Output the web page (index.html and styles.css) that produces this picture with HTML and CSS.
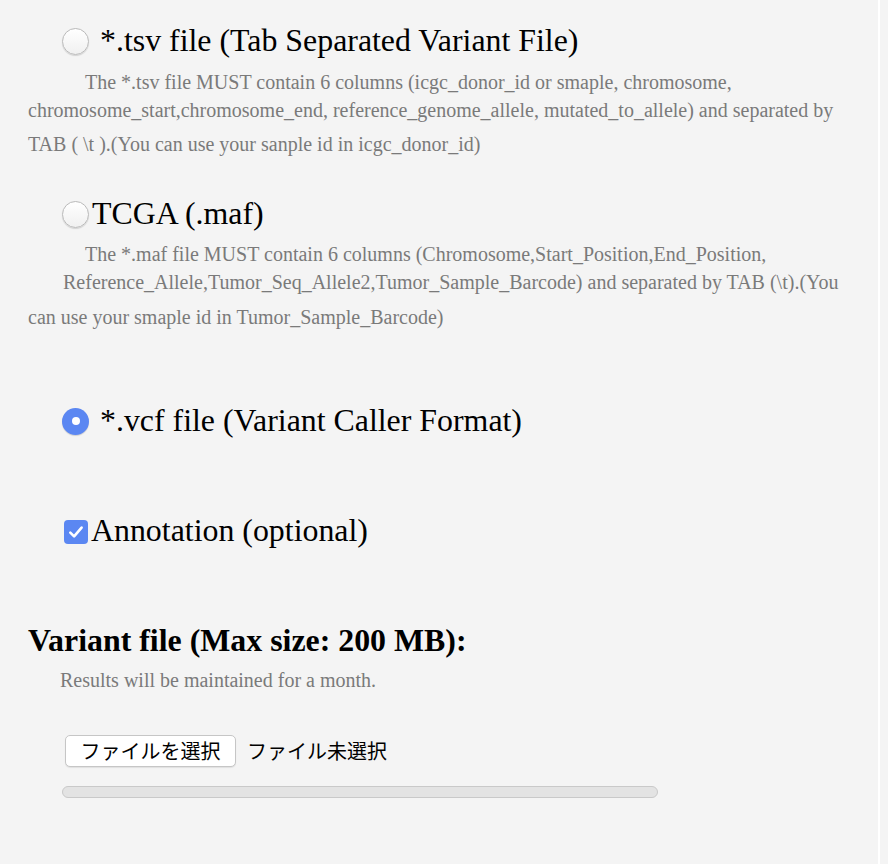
FILE: index.html
```html
<!DOCTYPE html>
<html lang="ja">
<head>
<meta charset="utf-8">
<title>Variant upload</title>
<link rel="stylesheet" href="styles.css">
</head>
<body>
<div class="page">
  <div class="opt opt-tsv">
    <span class="radio"></span>
    <span class="label gap-wide">*.tsv file (Tab Separated Variant File)</span>
  </div>
  <div class="desc desc-tsv">
    <div class="line indent">The *.tsv file MUST contain 6 columns (icgc_donor_id or smaple, chromosome,</div>
    <div class="line">chromosome_start,chromosome_end, reference_genome_allele, mutated_to_allele) and separated by</div>
    <div class="line last">TAB ( \t ).(You can use your sanple id in icgc_donor_id)</div>
  </div>

  <div class="opt opt-maf">
    <span class="radio"></span>
    <span class="label gap-tight">TCGA (.maf)</span>
  </div>
  <div class="desc desc-maf">
    <div class="line indent">The *.maf file MUST contain 6 columns (Chromosome,Start_Position,End_Position,</div>
    <div class="line indent-small">Reference_Allele,Tumor_Seq_Allele2,Tumor_Sample_Barcode) and separated by TAB (\t).(You</div>
    <div class="line last">can use your smaple id in Tumor_Sample_Barcode)</div>
  </div>

  <div class="opt opt-vcf">
    <span class="radio checked"></span>
    <span class="label gap-wide">*.vcf file (Variant Caller Format)</span>
  </div>

  <div class="opt opt-annot">
    <span class="checkbox">
      <svg viewBox="0 0 24 24" width="24" height="24"><path d="M6.3 12.6 L10.1 16.4 L17.6 7.6" fill="none" stroke="#fff" stroke-width="2.6" stroke-linecap="round" stroke-linejoin="round"/></svg>
    </span>
    <span class="label gap-tight">Annotation (optional)</span>
  </div>

  <h3 class="heading">Variant file (Max size: 200 MB):</h3>
  <div class="note">Results will be maintained for a month.</div>

  <div class="file-row">
    <span class="file-btn">ファイルを選択</span>
    <span class="file-name">ファイル未選択</span>
  </div>
  <div class="progress"></div>
</div>
</body>
</html>
```
FILE: styles.css
```css
html, body {
  margin: 0;
  padding: 0;
  background: #f4f4f4;
}
.page {
  width: 880px;
  min-height: 864px;
  border-right: 2px solid #ffffff;
  padding: 21px 0 0 28px;
  box-sizing: border-box;
  font-family: "Liberation Serif", "Times New Roman", serif;
  color: #000;
}
.opt {
  display: flex;
  align-items: flex-start;
  height: 40px;
  padding-left: 34px;
}
.label {
  font-size: 31.87px;
  line-height: 40px;
  white-space: nowrap;
}
.gap-wide { margin-left: 11px; }
.gap-tight { margin-left: 3px; }
.radio {
  flex: none;
  width: 27px;
  height: 27px;
  margin-top: 7px;
  border-radius: 50%;
  box-sizing: border-box;
  border: 1px solid #bababa;
  background: linear-gradient(#ffffff, #f0f0f0);
  box-shadow: 0 1px 1px rgba(0,0,0,0.14);
}
.radio.checked {
  border: none;
  background: #5b87f2;
  display: flex;
  align-items: center;
  justify-content: center;
  box-shadow: 0 1px 1px rgba(0,0,0,0.15);
}
.radio.checked::after {
  content: "";
  width: 8px;
  height: 8px;
  border-radius: 50%;
  background: #fff;
}
.checkbox {
  flex: none;
  width: 24px;
  height: 24px;
  margin: 8.65px 0 0 2px;
  border-radius: 4px;
  background: #5b87f2;
  display: block;
}
.checkbox svg { display: block; }
.desc {
  color: #7a7a7a;
  font-size: 20px;
}
.desc .line {
  line-height: 28px;
  white-space: nowrap;
}
.desc .indent { padding-left: 57px; }
.desc .indent-small { padding-left: 35px; }
.desc-tsv { margin-top: 6.5px; }
.desc-tsv .line.last { margin-top: 6px; }
.opt-maf { margin-top: 36px; }
.desc-maf { margin-top: 6.85px; }
.desc-maf .line.last { margin-top: 7px; }
.opt-vcf { margin-top: 70px; }
.opt-vcf .radio { margin-top: 6.65px; }
.opt-annot { margin-top: 70px; }
.heading {
  margin: 70px 0 0 0;
  font-size: 31.87px;
  line-height: 40px;
  font-weight: bold;
}
.note {
  margin-top: 4.85px;
  padding-left: 32px;
  color: #7a7a7a;
  font-size: 20px;
  line-height: 28px;
}
.file-row {
  display: flex;
  align-items: center;
  margin-top: 40.8px;
  padding-left: 37px;
  font-family: "Noto Sans CJK JP", "Noto Sans", sans-serif;
  font-size: 20px;
}
.file-btn {
  box-sizing: border-box;
  width: 171px;
  height: 32px;
  display: flex;
  align-items: center;
  justify-content: center;
  background: #ffffff;
  border: 1px solid #c6c6c6;
  border-radius: 5px;
  box-shadow: 0 1px 1px rgba(0,0,0,0.08);
  line-height: 1;
}
.file-name {
  margin-left: 11px;
  line-height: 1;
}
.progress {
  margin: 19px 0 0 34px;
  width: 596px;
  height: 12px;
  box-sizing: border-box;
  border: 1px solid #c9c9c9;
  border-radius: 6px;
  background: #e3e3e3;
}
```
